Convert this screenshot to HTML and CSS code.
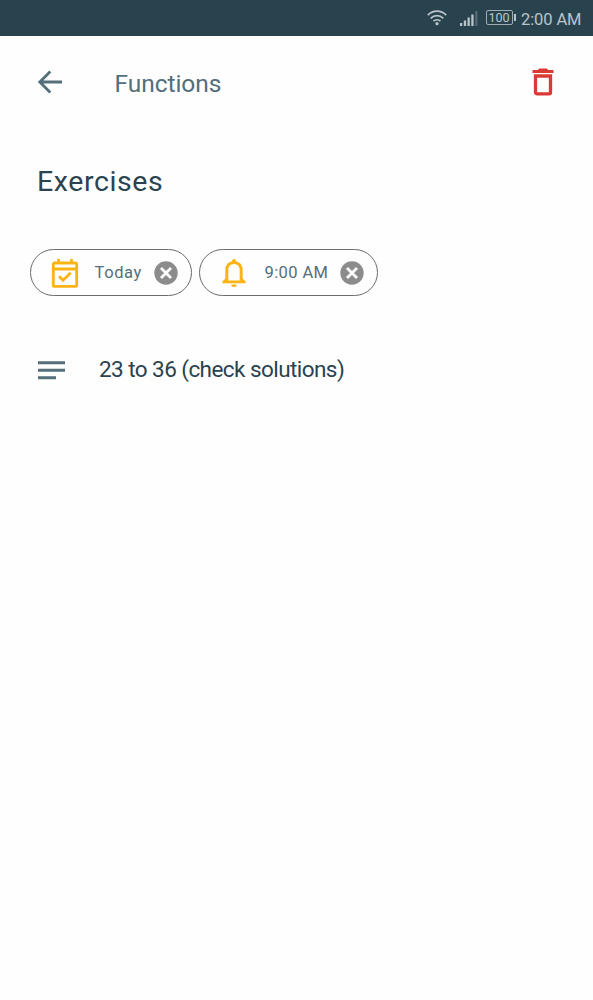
FILE: index.html
```html
<!DOCTYPE html>
<html lang="en">
<head>
<meta charset="utf-8">
<title>Functions</title>
<link rel="stylesheet" href="styles.css">
</head>
<body>
<div class="status">
  <svg class="wifi" width="20" height="16" viewBox="0 0 20 16" fill="none" stroke="currentColor" stroke-width="1.8"><path d="M.8 5.2C6-.2 14-.2 19.200 5.200M3.700 8.300c3.600-3.500 9-3.500 12.600 0M6.500 11.200c2-1.900 5-1.900 7 0"/><circle cx="10" cy="13.700" r="1.600" fill="currentColor" stroke="none"/></svg>
  <svg class="signal" width="18" height="16" viewBox="0 0 18 16" fill="currentColor"><path d="M0 13h2.300v3H0zM3.800 10.500h2.300V16H3.800zM7.500 7.500h2.300V16H7.500zM11.300 4.500h2.300V16h-2.300z"/><path opacity=".3" d="M15.200 1h2.300v15h-2.300z"/></svg>
  <div class="battery"><span>100</span></div>
  <span class="clock">2:00 AM</span>
</div>
<header class="bar">
  <svg class="back" width="26" height="26" viewBox="0 0 26 26" fill="none" stroke="currentColor" stroke-width="2.800"><path d="M25 13H3M13.300 2.500 2.800 13l10.500 10.500"/></svg>
  <span class="course">Functions</span>
  <svg class="trash" width="22" height="28" viewBox="0 0 22 28"><path fill="currentColor" d="M.5 2h5.300L7.300.5h7.400L16.200 2h5.300v3H.5z"/><path fill="none" stroke="currentColor" stroke-width="3.300" d="M3.500 8h15v16.200a1.600 1.600 0 0 1-1.600 1.600H5.100a1.600 1.600 0 0 1-1.600-1.600z"/></svg>
</header>
<h1 class="title">Exercises</h1>
<div class="chips">
  <div class="chip chip-date">
    <svg class="chip-icon" width="28" height="30" viewBox="0 0 28 30" fill="none" stroke="currentColor" stroke-width="2.800"><rect x="2.300" y="5" width="23.400" height="23.400" rx="1.500"/><path d="M2 11h24M7.500 1v5M20.500 1v5M8 18.300l4 4 7.800-7.500"/></svg>
    <span class="chip-label">Today</span>
    <svg class="close" width="24" height="24" viewBox="0 0 24 24"><circle cx="12" cy="12" r="11.700" fill="currentColor"/><path d="m7 7 10 10M17 7 7 17" stroke="#fff" stroke-width="2.800"/></svg>
  </div>
  <div class="chip chip-time">
    <svg class="chip-icon" width="24" height="30" viewBox="0 0 24 30"><path fill="none" stroke="currentColor" stroke-width="3" d="M4.800 24V12.500C4.800 7.400 7.500 4.400 12 4.400s7.200 3 7.200 8.100V24"/><path fill="currentColor" d="M10 4V3a2 2 0 0 1 4 0v1zM3.500 20.500.5 23.200V25.200h23v-2l-3-2.700-2 2h-13zM9.300 26.600h5.400a2.700 2.500 0 0 1-5.400 0z"/></svg>
    <span class="chip-label">9:00 AM</span>
    <svg class="close" width="24" height="24" viewBox="0 0 24 24"><circle cx="12" cy="12" r="11.700" fill="currentColor"/><path d="m7 7 10 10M17 7 7 17" stroke="#fff" stroke-width="2.800"/></svg>
  </div>
</div>
<div class="note">
  <svg class="lines" width="27" height="19" viewBox="0 0 27 19" fill="currentColor"><path d="M0 .3h27v3H0zM0 7.800h27v3H0zM0 15.300h18v3H0z"/></svg>
  <span class="note-text">23 to 36 (check solutions)</span>
</div>
</body>
</html>
```
FILE: styles.css
```css
* { box-sizing: border-box; }
body {
  margin: 0;
  height: 1000px;
  background: #fefefe;
  font-family: Roboto, "Liberation Sans", sans-serif;
  color: #2a434e;
  white-space: nowrap;
}
svg { display: block; flex: none; }
.status {
  display: flex;
  align-items: center;
  height: 36px;
  padding: 0 0 1px 427px;
  background: #29434e;
  color: #b9c5ca;
}
.signal { margin-left: 13px; }
.battery {
  position: relative;
  width: 27px;
  height: 15px;
  margin-left: 7.500px;
  border: 1px solid #9eacb3;
  border-radius: 2px;
  font-size: 12.500px;
  line-height: 14px;
  text-align: center;
}
.battery::after {
  content: "";
  position: absolute;
  right: -4px;
  top: 3px;
  width: 2px;
  height: 7px;
  background: #b9c5ca;
}
.clock {
  margin-left: 8.500px;
  padding-top: 3px;
  font-size: 16.5px;
  letter-spacing: -0.1px;
}
.bar {
  display: flex;
  align-items: center;
  height: 94px;
  padding: 0 39px 2px 37px;
  color: #546e7a;
}
.course {
  margin: 3px 0 0 51.500px;
  font-size: 24.5px;
  letter-spacing: -0.05px;
}
.trash { margin-left: auto; color: #d93a36; }
.title {
  margin: 32px 0 0 37px;
  font-size: 28.500px;
  font-weight: 400;
  line-height: 40px;
  letter-spacing: 0.6px;
}
.chips {
  display: flex;
  gap: 7.500px;
  margin: 47px 0 0 29.500px;
}
.chip {
  display: flex;
  align-items: center;
  height: 47px;
  padding: 0 13px 0 20px;
  border: 1px solid #6b6b6b;
  border-radius: 24px;
}
.chip-date { width: 162px; }
.chip-time { width: 179px; padding-left: 22px; }
.chip-icon { color: #fcb316; }
.chip-label {
  margin-left: 16px;
  color: #546e7a;
  font-size: 16.5px;
  letter-spacing: 0.6px;
}
.chip-time .chip-label { margin-left: 18.500px; letter-spacing: 0.4px; }
.close { margin-left: auto; color: #8c8c8c; }
.note {
  display: flex;
  align-items: center;
  margin: 54px 0 0 38px;
  height: 40px;
}
.lines { color: #546e7a; }
.note-text {
  margin: -2px 0 0 34px;
  font-size: 22.500px;
  letter-spacing: -0.56px;
}
```
